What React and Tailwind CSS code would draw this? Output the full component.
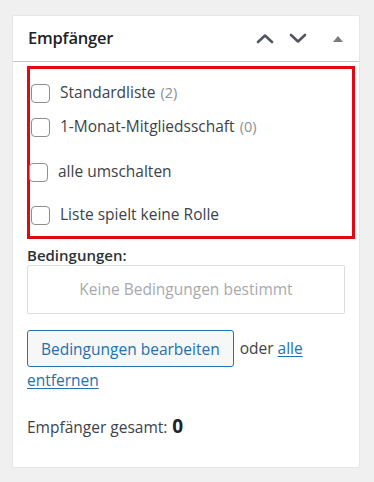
import React from "react";

const Checkbox = ({ className = "" }) => (
  <span className={`inline-block w-[19px] h-[19px] shrink-0 rounded-[4px] border border-[#8c8f94] bg-white ${className}`} />
);

const Row = ({ label, count, h = "h-[34px]", boxClass = "" }) => (
  <label className={`flex items-center ${h}`}>
    <Checkbox className={boxClass} />
    <span className="ml-[10px] text-[15.5px] text-[#3c434a]">{label}</span>
    {count && <span className="ml-[5px] text-[14.5px] text-[#8c8f94]">{count}</span>}
  </label>
);

export default function App() {
  return (
    <div className="min-h-[482px] w-[374px] bg-[#f0f0f1] pt-[15px] px-[12px] pb-[14px]" style={{ fontFamily: '"Open Sans", "Noto Sans", sans-serif' }}>
      <div className="w-[348px] h-[453px] bg-white border border-[#e6e6e6] rounded-[2px]">
        {/* Header */}
        <div className="flex items-center h-[46px] border-b border-[#c3c4c7] pl-[15px] pr-[16px]">
          <h2 className="text-[16.5px] font-semibold text-[#1d2327] tracking-[-0.2px]">Empfänger</h2>
          <div className="ml-auto flex items-center">
            <svg width="18" height="11" viewBox="0 0 18 11" fill="none" stroke="#50575e" strokeWidth="2.6" strokeLinecap="round" strokeLinejoin="round">
              <path d="M2 9 L9 2.5 L16 9" />
            </svg>
            <svg className="ml-[15px]" width="18" height="11" viewBox="0 0 18 11" fill="none" stroke="#50575e" strokeWidth="2.6" strokeLinecap="round" strokeLinejoin="round">
              <path d="M2 2 L9 8.5 L16 2" />
            </svg>
            <svg className="ml-[26px]" width="10" height="6" viewBox="0 0 10 6" fill="#787c82">
              <path d="M0 6 L5 0 L10 6 Z" />
            </svg>
          </div>
        </div>

        <div className="px-[14px]">
          {/* Red highlighted list */}
          <div className="mt-[4px] -mr-[10px] border-[3px] border-[#e30613] pl-[1px] pt-[7px] h-[173px]">
            <Row label="Standardliste" count="(2)" />
            <Row label="1-Monat-Mitgliedsschaft" count="(0)" />
            <Row label="alle umschalten" h="h-[56px]" boxClass="-ml-[2px] w-[17px]" />
            <Row label="Liste spielt keine Rolle" h="h-[30px]" />
          </div>

          <div className="mt-[6px] text-[15px] leading-[20px] font-semibold text-[#2c3338]">Bedingungen:</div>
          <div className="w-[318px] h-[49px] border border-[#dcdcde] rounded-[2px] flex items-center justify-center text-[15.5px] text-[#a7aaad]">
            Keine Bedingungen bestimmt
          </div>

          <div className="mt-[16px] text-[15.5px] leading-[37px] text-[#3c434a]">
            <button className="h-[37px] px-[13px] align-top border border-[#2271b1] rounded-[3px] bg-[#f6f7f7] text-[#2271b1] text-[15.5px]">
              Bedingungen bearbeiten
            </button>
            <span className="ml-[6px]">oder </span>
            <a className="text-[#2271b1] underline underline-offset-2">alle</a>
          </div>
          <div className="mt-[3px] text-[15.5px] leading-[20px]">
            <a className="text-[#2271b1] underline underline-offset-2">entfernen</a>
          </div>

          <div className="mt-[22px] flex items-baseline text-[15.5px] text-[#3c434a]">
            Empfänger gesamt:
            <span className="ml-[5px] text-[19px] font-bold text-[#1d2327]">0</span>
          </div>
        </div>
      </div>
    </div>
  );
}
